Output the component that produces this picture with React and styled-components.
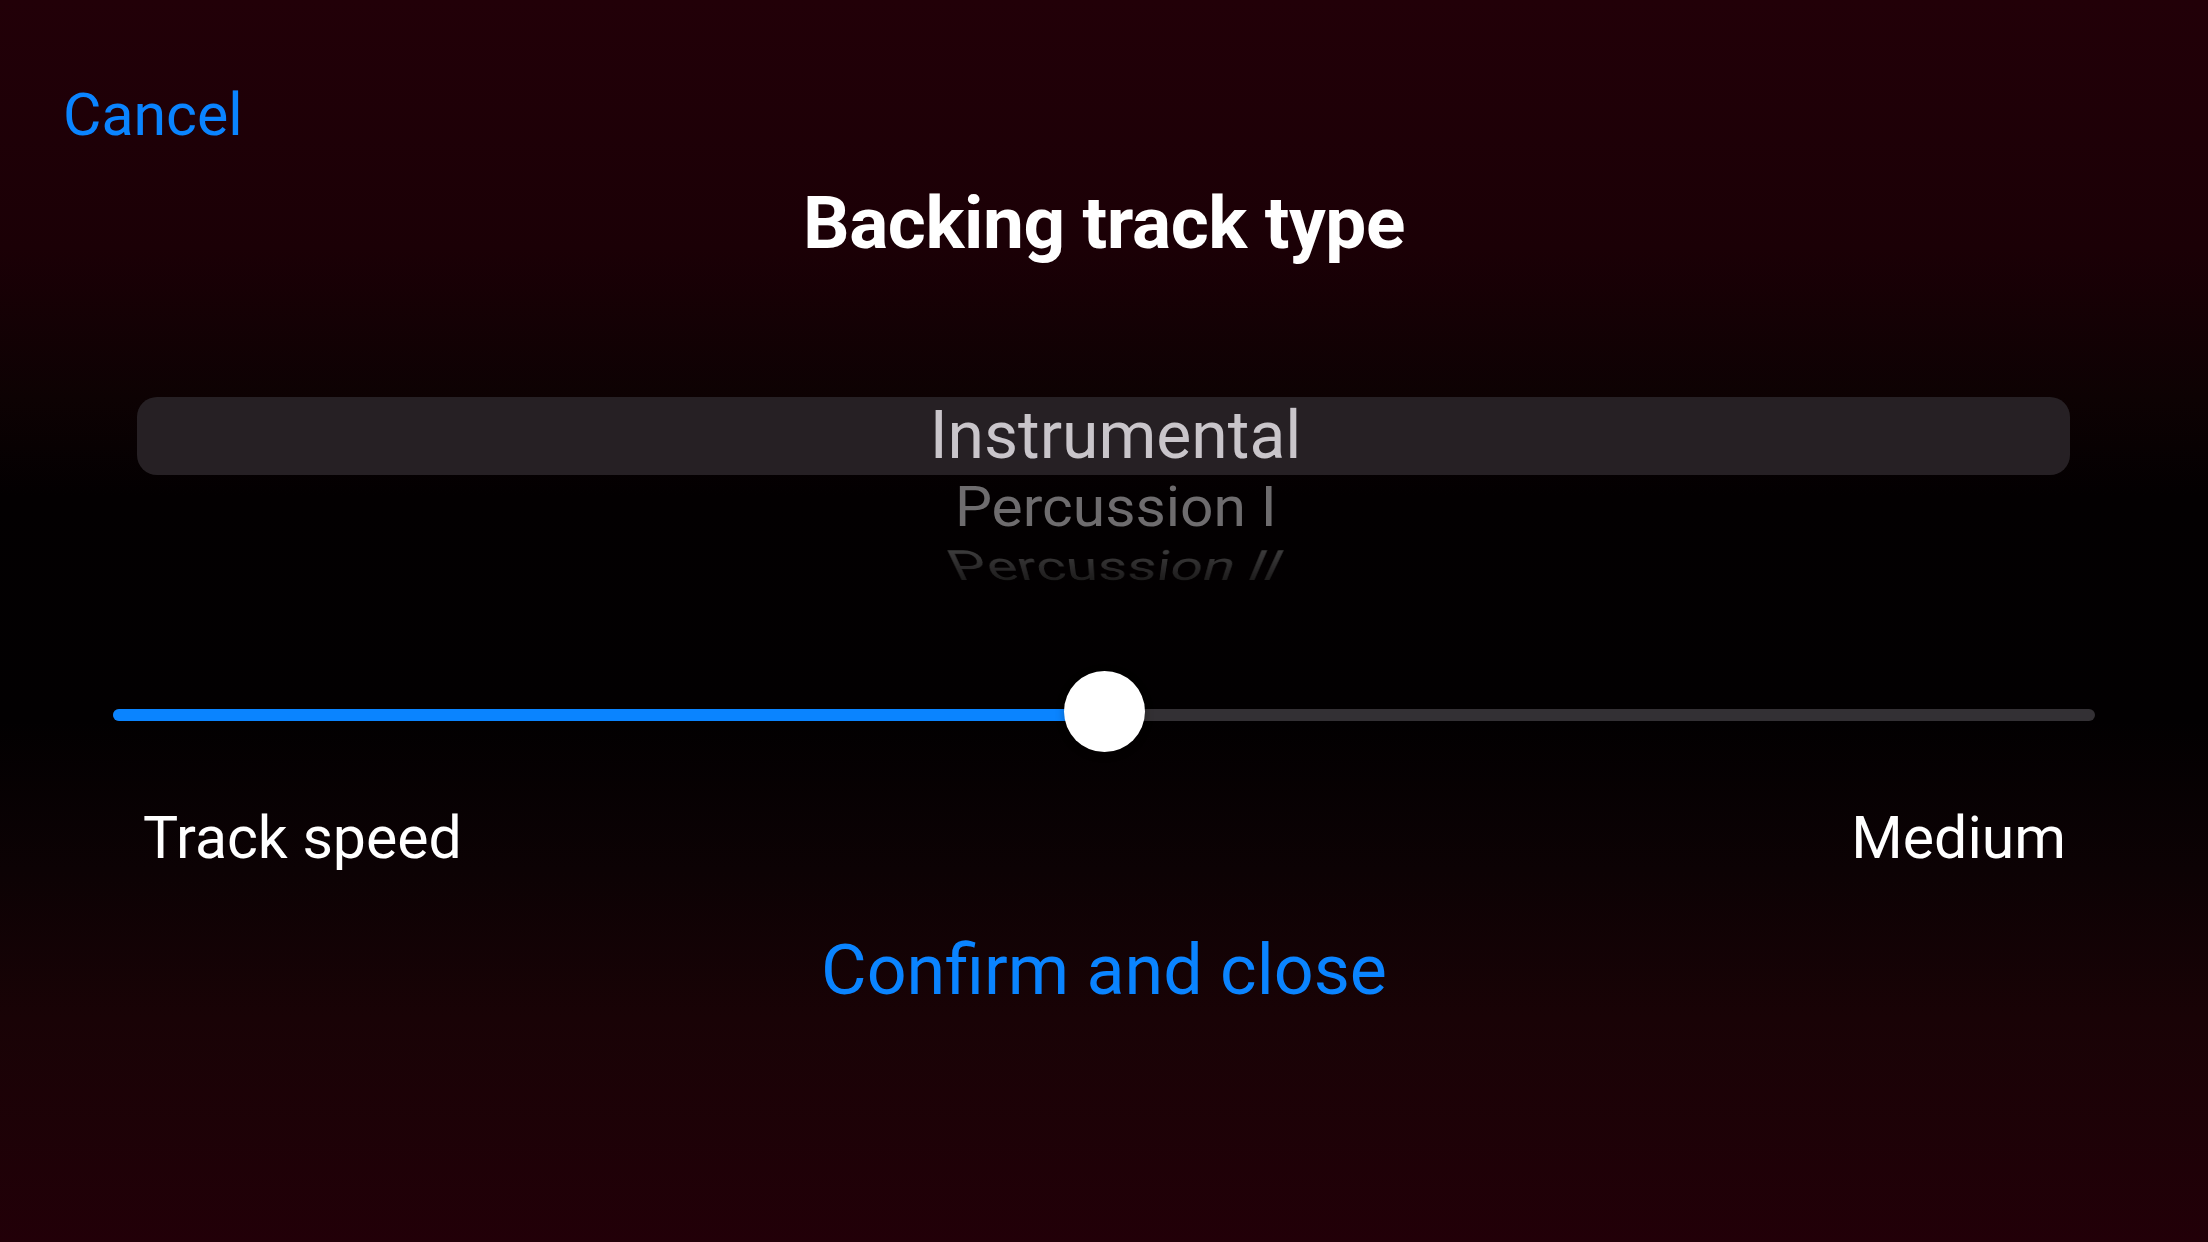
import styled, { createGlobalStyle } from "styled-components";

const GlobalStyle = createGlobalStyle`
  html, body {
    margin: 0;
    padding: 0;
    background: #000;
  }
  body {
    font-family: Roboto, "Liberation Sans", Arial, sans-serif;
    -webkit-font-smoothing: antialiased;
  }
`;

const StyledPage = styled.div`
  width: 2208px;
  height: 1242px;
  overflow: hidden;
  display: flex;
  flex-direction: column;
  background: linear-gradient(
    to bottom,
    #220008 0%,
    #1b0006 20%,
    #0d0203 32%,
    #030001 40%,
    #020001 58%,
    #0c0204 70%,
    #190306 82%,
    #220008 100%
  );
`;

const StyledTopBar = styled.div`
  padding: 85px 0 0 63px;
`;

const StyledTextButton = styled.button`
  border: none;
  background: none;
  padding: 0;
  margin: 0;
  font-family: inherit;
  color: #0a84ff;
  font-size: ${(p) => p.$size}px;
  line-height: 1;
  cursor: pointer;
`;

const StyledTitle = styled.h1`
  margin: 43px 0 0;
  text-align: center;
  color: #fff;
  font-size: 73px;
  font-weight: 700;
  line-height: 1;
  letter-spacing: -0.4px;
`;

const StyledPicker = styled.div`
  position: relative;
  margin: 137px 138px 0 137px;
  height: 188px;
  overflow: hidden;
  -webkit-mask-image: linear-gradient(to bottom, #000 0%, #000 74%, rgba(0, 0, 0, 0.3) 100%);
  mask-image: linear-gradient(to bottom, #000 0%, #000 74%, rgba(0, 0, 0, 0.3) 100%);
`;

const StyledBand = styled.div`
  position: absolute;
  left: 0;
  right: 0;
  top: 0;
  height: 78px;
  border-radius: 20px;
  background: #262024;
`;

const StyledPickerList = styled.div`
  position: relative;
  padding-left: 24px;
  display: flex;
  flex-direction: column;
  align-items: center;
`;

const StyledPickerItem = styled.div`
  height: ${(p) => p.$height}px;
  line-height: ${(p) => p.$height}px;
  font-size: 66px;
  color: ${(p) => p.$color};
  white-space: nowrap;
  transform: ${(p) => p.$transform};
  transform-origin: 50% 50%;
`;

const StyledSlider = styled.div`
  margin-top: 89px;
  height: 82px;
  padding: 0 113px;
  display: flex;
  align-items: center;
`;

const StyledTrack = styled.div`
  position: relative;
  flex: 1;
  height: 12px;
  border-radius: 6px;
  background: #333034;
`;

const StyledFill = styled.div`
  height: 100%;
  border-radius: 6px;
  background: #0a84ff;
`;

const StyledThumb = styled.div`
  position: absolute;
  top: 50%;
  width: 81px;
  height: 81px;
  margin: -44px 0 0 -40px;
  border-radius: 50%;
  background: #fff;
  box-shadow: 0 2px 8px rgba(0, 0, 0, 0.25);
`;

const StyledLabelRow = styled.div`
  margin-top: 52px;
  padding: 0 142px 0 143px;
  display: flex;
  justify-content: space-between;
  color: #fff;
  font-size: 59px;
  line-height: 1;
`;

const StyledFooter = styled.div`
  margin-top: 68px;
  display: flex;
  justify-content: center;
`;

const items = [
  { label: "Instrumental", height: 78, color: "#c9c5ca", transform: "none" },
  {
    label: "Percussion I",
    height: 66,
    color: "#6e6c6e",
    transform: "scale(0.89, 0.84)",
  },
  {
    label: "Percussion II",
    height: 52,
    color: "#4c4b4c",
    transform: "scale(0.87, 0.95) perspective(420px) rotateX(-50deg)",
  },
];

function Slider({ value }) {
  return (
    <StyledSlider>
      <StyledTrack>
        <StyledFill style={{ width: `${value}%` }} />
        <StyledThumb style={{ left: `${value}%` }} />
      </StyledTrack>
    </StyledSlider>
  );
}

function App() {
  return (
    <>
      <GlobalStyle />
      <StyledPage>
        <StyledTopBar>
          <StyledTextButton $size={59}>Cancel</StyledTextButton>
        </StyledTopBar>
        <StyledTitle>Backing track type</StyledTitle>

        <StyledPicker>
          <StyledBand />
          <StyledPickerList>
            {items.map((item) => (
              <StyledPickerItem
                key={item.label}
                $height={item.height}
                $color={item.color}
                $transform={item.transform}
              >
                {item.label}
              </StyledPickerItem>
            ))}
          </StyledPickerList>
        </StyledPicker>

        <Slider value={50} />

        <StyledLabelRow>
          <span>Track speed</span>
          <span>Medium</span>
        </StyledLabelRow>

        <StyledFooter>
          <StyledTextButton $size={70}>Confirm and close</StyledTextButton>
        </StyledFooter>
      </StyledPage>
    </>
  );
}

export default App;
